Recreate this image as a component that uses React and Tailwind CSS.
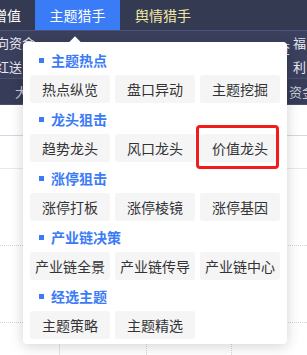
import { useState } from "react"

const font = { fontFamily: '"Noto Sans CJK SC", "Noto Sans", sans-serif' }

const sections = [
  { title: "主题热点", items: ["热点纵览", "盘口异动", "主题挖掘"] },
  { title: "龙头狙击", items: ["趋势龙头", "风口龙头", "价值龙头"] },
  { title: "涨停狙击", items: ["涨停打板", "涨停棱镜", "涨停基因"] },
  { title: "产业链决策", items: ["产业链全景", "产业链传导", "产业链中心"] },
  { title: "经选主题", items: ["主题策略", "主题精选"] },
]

function ThemeMenu() {
  return (
    <div className="absolute left-[23px] top-[42px] w-[264px] rounded-[4px] bg-white pt-[8px] pb-[5px] px-[7px] shadow-[0_2px_14px_rgba(0,0,0,0.18)]">
      {/* little arrow */}
      <div className="absolute left-[48px] top-[-4px] h-[8px] w-[8px] rotate-45 bg-white" />
      {sections.map((s, i) => (
        <div key={s.title} className={i > 0 ? "mt-[6px]" : ""}>
          <div className="mb-[5px] flex h-[20px] items-center pl-[9px]">
            <span className="h-[5px] w-[5px] bg-[#3b7bf6]" />
            <span className="ml-[7px] text-[14px] font-bold leading-[20px] text-[#3b7bf6]">{s.title}</span>
          </div>
          <div className="flex gap-[5px]">
            {s.items.map((item) => (
              <div
                key={item}
                className="flex h-[28px] w-[80px] items-center justify-center rounded-[3px] bg-[#f5f5f6] text-[14px] text-[#333]"
              >
                {item}
              </div>
            ))}
          </div>
        </div>
      ))}
    </div>
  )
}

export default function App() {
  const [active] = useState("主题猎手")

  return (
    <div className="relative h-[355px] w-[307px] overflow-hidden bg-white" style={font}>
      {/* top nav */}
      <div className="flex h-[30px] items-center bg-[#353a53] text-[14px]">
        <div className="flex h-full w-[35px] items-center justify-end whitespace-nowrap pr-[14px] text-white">增值</div>
        <div
          className={
            active === "主题猎手"
              ? "flex h-full w-[85px] items-center justify-center bg-[#3a7cf6] text-white"
              : "flex h-full w-[85px] items-center justify-center text-white"
          }
        >
          主题猎手
        </div>
        <div className="flex h-full items-center pl-[15px] text-[#f2e8a4]">舆情猎手</div>
      </div>

      {/* second band */}
      <div className="h-[1px] bg-[#4d5377]" />
      <div className="flex h-[47px] bg-[#3b405e] text-[13px] text-[#e8e9f0]">
        <div className="flex w-[40px] flex-col justify-around pl-0">
          <span className="ml-[-4px] whitespace-nowrap">向资金</span>
          <span className="ml-[-4px] whitespace-nowrap">红送</span>
        </div>
        <div className="flex flex-1 items-start gap-[18px] whitespace-nowrap pt-[7px] pl-[14px]">
          <span>北上</span>
          <span>纪钟头条</span>
          <span>单独要点</span>
          <span>基层调查</span>
        </div>
        <div className="flex w-[14px] flex-col justify-around">
          <span>福</span>
          <span>利</span>
        </div>
      </div>
      <div className="flex h-[27px] items-center justify-between border-y border-[#4a4f6c] bg-[#373c58] text-[13px] text-[#c9cbd8]">
        <span className="pl-[15px]">大</span>
        <span className="mr-[-8px]">资金</span>
      </div>

      {/* content area */}
      <div className="h-[30px]" />
      <div className="h-[1px] bg-[#d6d6e6]" />
      <div className="h-[32px]" />
      <div className="h-[1px] bg-[#e8e8f0]" />
      <div className="h-[76px]" />
      <div className="border-t border-dotted border-[#d4d4d4]" />
      <div className="h-[76px]" />
      <div className="border-t border-dotted border-[#d4d4d4]" />
      <div className="flex h-[40px]">
        <div className="w-[60px] border-r border-[#e4e4ec]" />
        <div className="w-[87px] border-r border-dotted border-[#d4d4d4]" />
        <div className="w-[85px] border-r border-dotted border-[#d4d4d4]" />
      </div>

      <ThemeMenu />

      {/* highlight box */}
      <div className="absolute left-[196px] top-[125px] h-[44px] w-[83px] rounded-[4px] border-[3px] border-[#f21c1c]" />
    </div>
  )
}
